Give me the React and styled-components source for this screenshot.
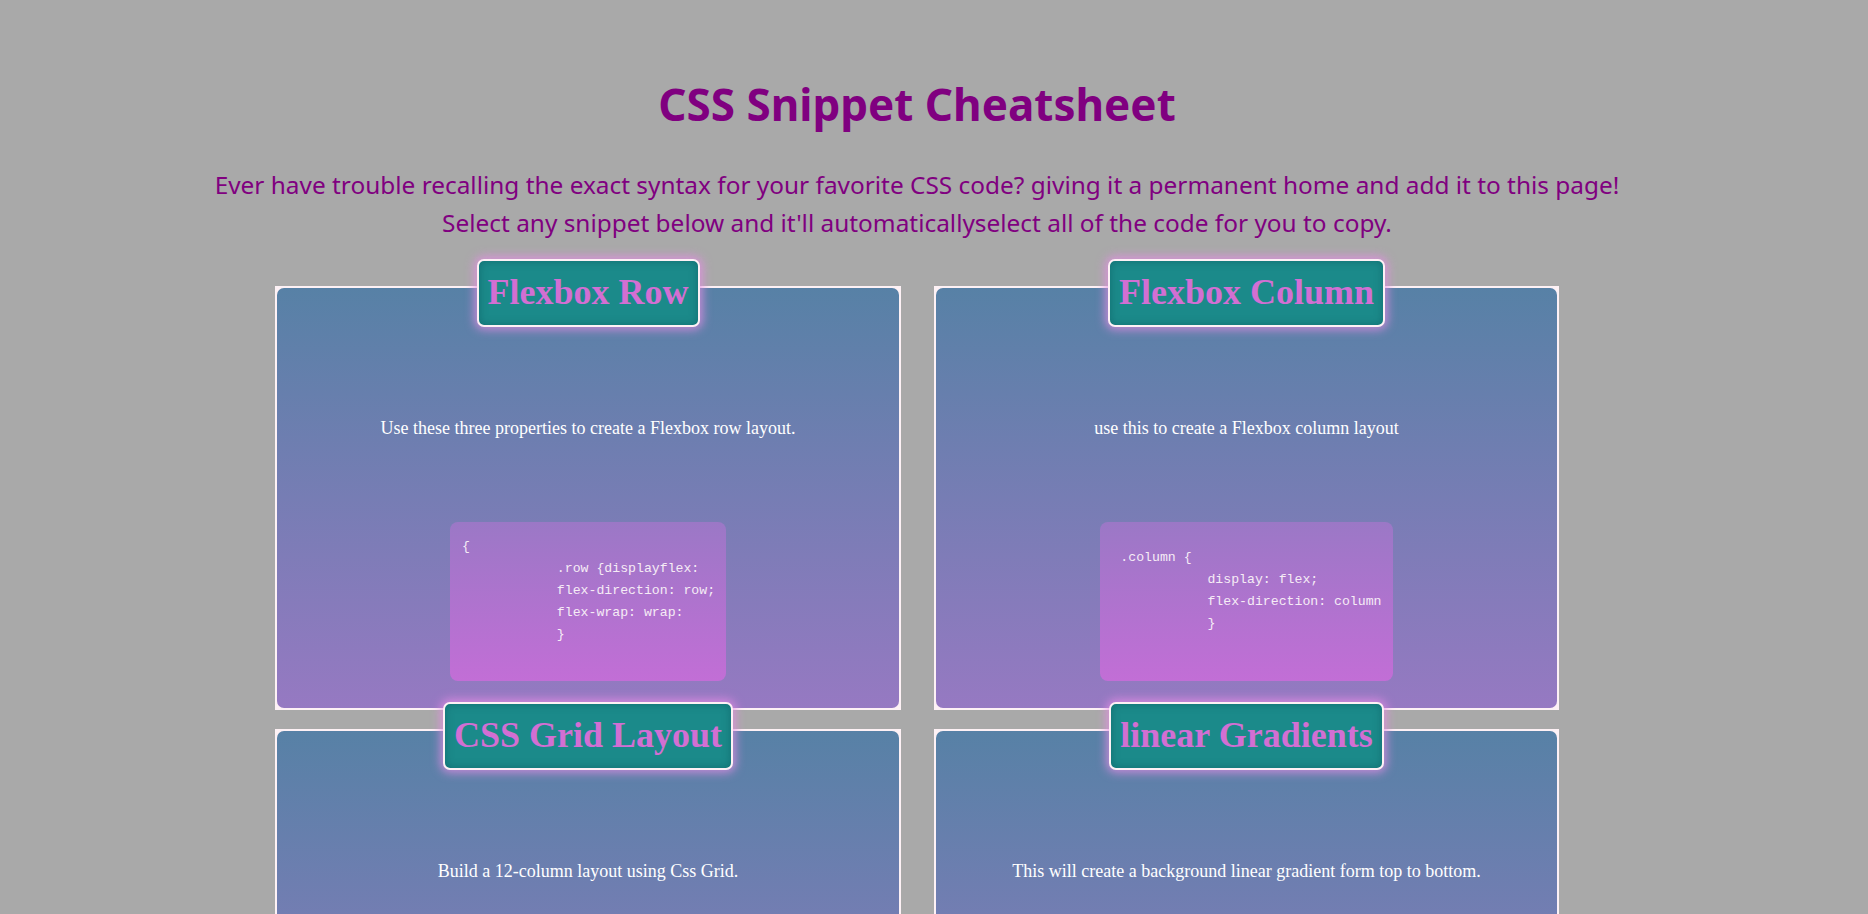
import React from "react";
import styled, { createGlobalStyle } from "styled-components";

const snippets = [
  {
    title: "Flexbox Row",
    text: "Use these three properties to create a Flexbox row layout.",
    code: ["{", "            .row {displayflex:", "            flex-direction: row;", "            flex-wrap: wrap:", "            }"],
  },
  {
    title: "Flexbox Column",
    text: "use this to create a Flexbox column layout",
    code: [" .column {", "            display: flex;", "            flex-direction: column", "            }"],
  },
  {
    title: "CSS Grid Layout",
    text: "Build a 12-column layout using Css Grid.",
    code: [".grid {", "            display: grid;", "            grid-template-columns: repeat(12, 1fr);", "            }"],
  },
  {
    title: "linear Gradients",
    text: "This will create a background linear gradient form top to bottom.",
    code: [".gradient {", "            background: linear-gradient(#fff, #000);", "            }"],
  },
];

const App = () => {
  return (
    <>
      <GlobalStyle />
      <Page>
        <Title>CSS Snippet Cheatsheet</Title>
        <Intro>
          Ever have trouble recalling the exact syntax for your favorite CSS code? giving it a permanent home and add it to this page!
          <br />
          Select any snippet below and it'll automaticallyselect all of the code for you to copy.
        </Intro>
        <Grid>
          {snippets.map((snippet, index) => (
            <Card key={index}>
              <CardBody>
                <Badge>{snippet.title}</Badge>
                <Description>{snippet.text}</Description>
                <CodeBox>
                  <Code>{snippet.code.join("\n") + "\n "}</Code>
                </CodeBox>
              </CardBody>
            </Card>
          ))}
        </Grid>
      </Page>
    </>
  );
};

export default App;

const GlobalStyle = createGlobalStyle`
  body {
    margin: 0;
    background: #a9a9a9;
  }
`;

const Page = styled.div`
  width: 1834px;
  padding-top: 79px;
  padding-bottom: 40px;
`;

const Title = styled.h1`
  margin: 0;
  text-align: center;
  font-family: "Noto Sans", sans-serif;
  font-size: 44px;
  line-height: 50px;
  font-weight: 700;
  color: #800080;
`;

const Intro = styled.p`
  margin: 37px 0 0;
  text-align: center;
  font-family: "Noto Sans", sans-serif;
  font-size: 24.4px;
  line-height: 38px;
  color: #800080;
`;

const Grid = styled.div`
  display: grid;
  grid-template-columns: 626px 625px;
  column-gap: 33px;
  row-gap: 19px;
  width: 1284px;
  margin: 44px auto 0;
`;

const Card = styled.div`
  border: 2px solid #fdf1f5;
  background: #fdf1f5;
`;

const CardBody = styled.div`
  display: flex;
  flex-direction: column;
  align-items: center;
  height: 420px;
  border-radius: 7px;
  background: linear-gradient(#5781a6, #9679c2);
`;

const Badge = styled.h2`
  position: relative;
  z-index: 1;
  margin: -29px 0 0;
  padding: 10px 9px 12px;
  border: 2px solid #fdf1f5;
  border-radius: 7px;
  background: #1b8a8a;
  box-shadow: 0 0 10px 3px rgba(230, 140, 230, 0.75), inset 0 0 8px rgba(0, 60, 70, 0.35);
  font-family: "Liberation Serif", serif;
  font-size: 36px;
  line-height: 42px;
  font-weight: 700;
  color: #d26fd3;
  white-space: nowrap;
`;

const Description = styled.p`
  margin: 90px 0 0;
  font-family: "Liberation Serif", serif;
  font-size: 18px;
  line-height: 22px;
  color: #ffffff;
  text-align: center;
`;

const CodeBox = styled.div`
  display: flex;
  align-items: center;
  height: 159px;
  margin-top: 83px;
  padding: 0 11px 0 12px;
  border-radius: 8px;
  background: linear-gradient(#9b78c6, #c26ed6);
`;

const Code = styled.pre`
  margin: 0;
  font-family: "Liberation Mono", monospace;
  font-size: 13.2px;
  line-height: 22px;
  color: #f6ecf6;
`;
